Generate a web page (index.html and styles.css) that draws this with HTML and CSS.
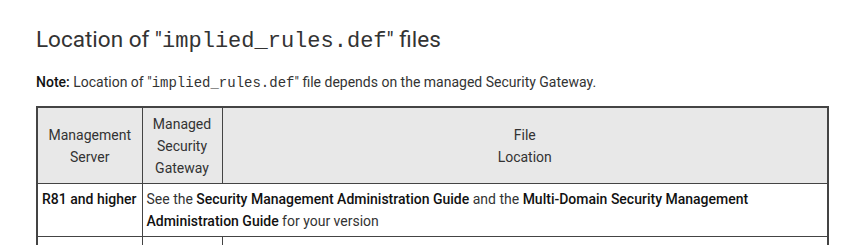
FILE: index.html
```html
<!DOCTYPE html>
<html>
<head>
<meta charset="utf-8">
<link rel="stylesheet" href="styles.css">
</head>
<body>
<div class="page">
  <h2 class="title">Location of "<code class="mono">implied_rules.def</code>" files</h2>
  <p class="note"><span class="note-label">Note:</span> Location of "<code class="mono">implied_rules.def</code>" file depends on the managed Security Gateway.</p>
  <table class="tbl">
    <colgroup>
      <col class="c1">
      <col class="c2">
      <col class="c3">
    </colgroup>
    <thead>
      <tr>
        <th>Management<br>Server</th>
        <th>Managed<br>Security<br>Gateway</th>
        <th>File<br>Location</th>
      </tr>
    </thead>
    <tbody>
      <tr>
        <td class="ver">R81 and higher</td>
        <td colspan="2">See the <span class="b">Security Management Administration Guide</span> and the <span class="b">Multi-Domain Security Management Administration Guide</span> for your version</td>
      </tr>
      <tr class="cut">
        <td></td><td></td><td></td>
      </tr>
    </tbody>
  </table>
</div>
</body>
</html>
```

FILE: styles.css
```css
html, body {
  margin: 0;
  padding: 0;
  background: #fff;
}
body {
  font-family: Roboto, "Noto Sans", sans-serif;
  color: #333;
  overflow: hidden;
}
.page {
  padding: 24px 12px 0 36px;
}
.title {
  margin: 0;
  font-size: 22.5px;
  font-weight: 400;
  line-height: 30px;
  color: #333;
}
.title .mono {
  font-family: "Liberation Mono", monospace;
  font-size: 22px;
}
.note {
  margin: 15px 0 0 0;
  font-size: 14px;
  line-height: 20px;
  color: #333;
}
.note .mono {
  font-family: "Liberation Mono", monospace;
  font-size: 14px;
}
.note-label {
  font-weight: 500;
  color: #111;
}
.tbl {
  margin-top: 13px;
  width: 793px;
  table-layout: fixed;
  border-collapse: collapse;
  border: 2px solid #444;
  font-size: 14px;
}
.c1 { width: 105px; }
.c2 { width: 80px; }
.tbl th, .tbl td {
  border: 1px solid #444;
  line-height: 22px;
}
.tbl th {
  background: #e8e8e8;
  font-weight: 400;
  color: #333;
  padding: 5px 2px 4px;
  text-align: center;
  vertical-align: middle;
}
.tbl td {
  padding: 4px 4px;
  vertical-align: top;
}
.ver {
  white-space: nowrap;
  font-weight: 500;
  color: #111;
}
.b {
  font-weight: 500;
  color: #111;
}
.cut td {
  height: 20px;
}
```
